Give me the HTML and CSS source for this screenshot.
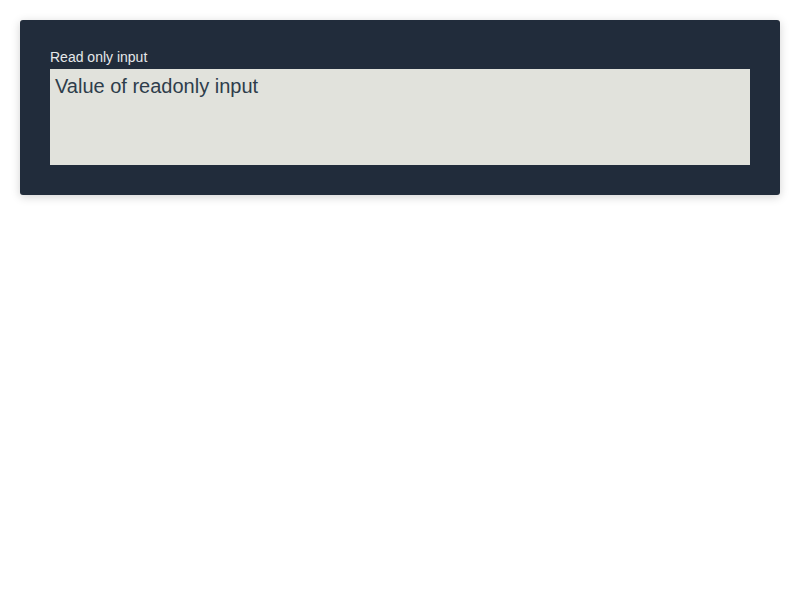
FILE: index.html
```html
<!DOCTYPE html>
<html>
<head>
<meta charset="utf-8">
<link rel="stylesheet" href="styles.css">
</head>
<body>
<div class="card">
  <label class="label" for="ro">Read only input</label>
  <textarea id="ro" class="field" readonly>Value of readonly input</textarea>
</div>
</body>
</html>
```
FILE: styles.css
```css
html, body {
  margin: 0;
  padding: 0;
  background: #ffffff;
  font-family: "Liberation Sans", Arial, sans-serif;
}
body {
  padding: 20px;
}
.card {
  background: #212c3b;
  border-radius: 3px;
  padding: 30px;
  box-shadow: 0 2px 10px rgba(0, 0, 0, 0.18);
  display: flex;
  flex-direction: column;
}
.label {
  display: block;
  color: #e6e8ea;
  font-size: 14px;
  line-height: 19px;
  height: 19px;
  margin-top: -2px;
  margin-bottom: 2px;
}
.field {
  display: block;
  box-sizing: border-box;
  width: 100%;
  height: 96px;
  margin: 0;
  border: none;
  outline: none;
  resize: none;
  background: #e1e2dc;
  color: #2e3d4b;
  font-family: "Liberation Sans", Arial, sans-serif;
  font-size: 20px;
  line-height: 24px;
  padding: 5px;
}
```
